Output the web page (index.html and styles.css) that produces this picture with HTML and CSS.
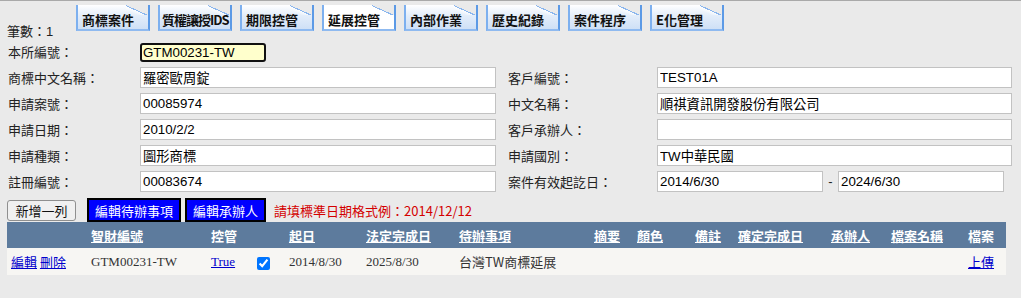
FILE: index.html
```html
<!DOCTYPE html>
<html lang="zh-Hant">
<head>
  <meta charset="UTF-8" />
  <title>案件維護</title>
  <link rel="stylesheet" href="styles.css">
</head>
<body>

  <!-- 上方頁籤 -->
  <div class="tabbar">
    <span class="count">筆數：1</span>
    <a class="tab">商標案件</a>
    <a class="tab tight">質權讓授IDS</a>
    <a class="tab">期限控管</a>
    <a class="tab active">延展控管</a>
    <a class="tab">內部作業</a>
    <a class="tab">歷史紀錄</a>
    <a class="tab">案件程序</a>
    <a class="tab">E化管理</a>
  </div>

  <!-- 基本資料 -->
  <div class="form">
    <label>本所編號：</label>
    <div class="cell"><input class="key" type="text" value="GTM00231-TW"></div>
    <span></span>
    <span></span>

    <label>商標中文名稱：</label>
    <input type="text" value="羅密歐周錠">
    <label class="right">客戶編號：</label>
    <input type="text" value="TEST01A">

    <label>申請案號：</label>
    <input type="text" value="00085974">
    <label class="right">中文名稱：</label>
    <input type="text" value="順祺資訊開發股份有限公司">

    <label>申請日期：</label>
    <input type="text" value="2010/2/2">
    <label class="right">客戶承辦人：</label>
    <input type="text" value="">

    <label>申請種類：</label>
    <input type="text" value="圖形商標">
    <label class="right">申請國別：</label>
    <input type="text" value="TW中華民國">

    <label>註冊編號：</label>
    <input type="text" value="00083674">
    <label class="right">案件有效起訖日：</label>
    <div class="range">
      <input type="text" value="2014/6/30">
      <span class="dash">-</span>
      <input type="text" value="2024/6/30">
    </div>
  </div>

  <!-- 按鈕列 -->
  <div class="actions">
    <button class="plain">新增一列</button>
    <button class="blue first">編輯待辦事項</button>
    <button class="blue">編輯承辦人</button>
    <span class="hint">請填標準日期格式例：2014/12/12</span>
  </div>

  <!-- 待辦事項表格 -->
  <table class="grid">
    <colgroup>
      <col style="width:80px"><col style="width:120px"><col style="width:46px"><col style="width:32px">
      <col style="width:77px"><col style="width:93px"><col style="width:135px"><col style="width:43px">
      <col style="width:58px"><col style="width:43px"><col style="width:93px"><col style="width:60px">
      <col style="width:77px"><col style="width:42px">
    </colgroup>
    <thead>
      <tr>
        <th></th>
        <th><a>智財編號</a></th>
        <th>控管</th>
        <th></th>
        <th><a>起日</a></th>
        <th><a>法定完成日</a></th>
        <th><a>待辦事項</a></th>
        <th><a>摘要</a></th>
        <th><a>顏色</a></th>
        <th><a>備註</a></th>
        <th><a>確定完成日</a></th>
        <th><a>承辦人</a></th>
        <th><a>檔案名稱</a></th>
        <th>檔案</th>
      </tr>
    </thead>
    <tbody>
      <tr>
        <td class="ops"><a>編輯</a> <a>刪除</a></td>
        <td class="serif">GTM00231-TW</td>
        <td class="serif"><a>True</a></td>
        <td><input type="checkbox" checked></td>
        <td class="serif">2014/8/30</td>
        <td class="serif">2025/8/30</td>
        <td>台灣TW商標延展</td>
        <td></td>
        <td></td>
        <td></td>
        <td></td>
        <td></td>
        <td></td>
        <td><a>上傳</a></td>
      </tr>
    </tbody>
  </table>

</body>
</html>
```

FILE: styles.css
```css
/* 整體 */
body {
  margin: 0;
  background: #eaeaea;
  border-top: 1px solid #a9a9a9;
  font-family: "Liberation Sans", "Noto Sans CJK TC", sans-serif;
  font-size: 13px;
  color: #222;
}

/* 頁籤列 */
.tabbar {
  display: flex;
  align-items: flex-start;
  height: 26px;
  padding: 4px 0 0 7px;
}

.count {
  width: 69px;
  padding-top: 19px;
  line-height: 16px;
}

.tab {
  position: relative;
  box-sizing: border-box;
  width: 74px;
  height: 26px;
  margin-right: 8px;
  padding: 7px 0 0 4px;
  border-left: 2px solid #7db0ef;
  border-right: 2px solid #5c9ae6;
  border-bottom: 2px solid #8fbaf0;
  background: linear-gradient(to bottom, #ffffff 0%, #e3edfa 45%, #cfe0f6 100%);
  font-family: "Noto Sans CJK TC", sans-serif;
  font-weight: 700;
  font-size: 13px;
  line-height: 16px;
  color: #111;
  white-space: nowrap;
  overflow: hidden;
}

.tab.tight {
  padding-left: 2px;
  letter-spacing: -1px;
}

.tab.active {
  background: #ffffff;
}

/* 右上角折角 */
.tab::after {
  content: "";
  position: absolute;
  top: 0;
  right: 0;
  width: 22px;
  height: 10px;
  background: linear-gradient(to bottom left, #eaeaea 50%, #8ab6ee 50%, #8ab6ee calc(50% + 1px), rgba(255, 255, 255, 0.7) calc(50% + 1px), rgba(255, 255, 255, 0) 75%);
}

/* 表單 */
.form {
  display: grid;
  grid-template-columns: 132px 356px 161px 355px;
  grid-auto-rows: 21px;
  row-gap: 5px;
  align-items: center;
  margin-top: 10px;
  padding-left: 8px;
}

.form label {
  font-family: "Noto Sans CJK TC", sans-serif;
  font-size: 13px;
  color: #222;
}

.form label.right {
  padding-left: 12px;
}

.form input,
.range input {
  box-sizing: border-box;
  height: 21px;
  width: 100%;
  margin: 0;
  padding: 1px 2px;
  border: 1px solid #c2c2c2;
  background: #fff;
  font-family: "Liberation Sans", "Noto Sans CJK TC", sans-serif;
  font-size: 13.3px;
  color: #000;
}

.cell {
  align-self: end;
}

.form input.key {
  width: 126px;
  height: 19px;
  padding: 0 1px;
  border: 2px solid #111;
  border-radius: 3px;
  background: #ffffcc;
}

.range {
  display: flex;
  align-items: center;
}

.range input {
  width: 166px;
}

.dash {
  width: 15px;
  text-align: center;
}

/* 按鈕列 */
.actions {
  display: flex;
  align-items: center;
  height: 24px;
  margin-top: 6px;
  padding-left: 7px;
}

button {
  box-sizing: border-box;
  margin: 0;
  font-family: "Noto Sans CJK TC", sans-serif;
  font-size: 13px;
  white-space: nowrap;
  cursor: pointer;
}

.plain {
  width: 69px;
  height: 21px;
  padding: 0;
  border: 1px solid #8f8f8f;
  border-radius: 3px;
  background: #f0f0f0;
  color: #111;
}

.blue {
  height: 24px;
  padding: 0 6px;
  border: 2px solid #000;
  background: #0000ff;
  color: #fff;
  margin-left: 4px;
}

.blue.first {
  margin-left: 11px;
}

.hint {
  margin-left: 8px;
  color: #d40000;
  font-family: "Noto Sans CJK TC", sans-serif;
}

/* 表格 */
.grid {
  margin-left: 7px;
  width: 999px;
  table-layout: fixed;
  border-collapse: collapse;
}

.grid th {
  height: 26px;
  padding: 0 4px;
  background: #5d7b9d;
  color: #fff;
  font-family: "Noto Sans CJK TC", sans-serif;
  font-weight: 700;
  font-size: 13px;
  text-align: left;
  white-space: nowrap;
}

.grid th a {
  color: #fff;
  text-decoration: underline;
}

.grid td {
  height: 27px;
  padding: 0 4px;
  background: #f7f6f3;
  color: #333;
  font-family: "Noto Sans CJK TC", sans-serif;
  font-size: 13px;
  white-space: nowrap;
}

.grid td a {
  color: #0000cc;
  text-decoration: underline;
}

.grid td.serif {
  font-family: "Liberation Serif", serif;
  font-size: 13px;
}

.grid input[type="checkbox"] {
  margin: 0;
  width: 13px;
  height: 13px;
  vertical-align: middle;
}
```
